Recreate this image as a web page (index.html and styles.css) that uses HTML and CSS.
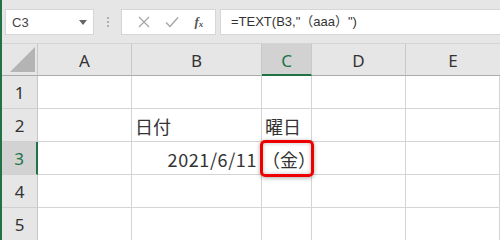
FILE: index.html
```html
<!DOCTYPE html>
<html>
<head>
<meta charset="utf-8">
<link rel="stylesheet" href="styles.css">
</head>
<body>
<div class="app">
  <div class="toolbar">
    <div class="namebox"><span class="name">C3</span><svg class="dd" width="8" height="5" viewBox="0 0 8 5"><path d="M0 0H8L4 5Z" fill="#666"/></svg></div>
    <div class="grip"><i></i><i></i><i></i></div>
    <div class="fbtns">
      <svg width="12" height="12" viewBox="0 0 12 12"><path d="M1 1L11 11M11 1L1 11" stroke="#a6a6a6" stroke-width="1.3" fill="none"/></svg>
      <svg width="14" height="12" viewBox="0 0 14 12"><path d="M1 6.5L5 10.5L13 1.5" stroke="#a6a6a6" stroke-width="1.4" fill="none"/></svg>
      <span class="fx">f<sub>x</sub></span>
    </div>
    <div class="formula">=TEXT(B3,"（aaa）")</div>
  </div>
  <div class="sheet">
    <div class="corner"><svg width="25" height="25" viewBox="0 0 25 25"><path d="M25 0V25H0Z" fill="#b4b4b4"/></svg></div>
    <div class="ch">A</div>
    <div class="ch">B</div>
    <div class="ch sel">C</div>
    <div class="ch">D</div>
    <div class="ch last">E</div>

    <div class="rh">1</div><div class="c"></div><div class="c"></div><div class="c"></div><div class="c"></div><div class="c"></div>
    <div class="rh">2</div><div class="c"></div><div class="c">日付</div><div class="c">曜日</div><div class="c"></div><div class="c"></div>
    <div class="rh sel">3</div><div class="c"></div><div class="c right date">2021/6/11</div><div class="c active">（金）<span class="mark"></span></div><div class="c"></div><div class="c"></div>
    <div class="rh">4</div><div class="c"></div><div class="c"></div><div class="c"></div><div class="c"></div><div class="c"></div>
    <div class="rh">5</div><div class="c"></div><div class="c"></div><div class="c"></div><div class="c"></div><div class="c"></div>
  </div>
</div>
</body>
</html>
```
FILE: styles.css
```css
html, body { margin: 0; padding: 0; }
body {
  width: 500px; height: 240px; overflow: hidden;
  background: #fff;
  font-family: "Noto Sans", "Noto Sans CJK JP", sans-serif;
}
.app { border-left: 2px solid #217346; height: 240px; box-sizing: border-box; }
.toolbar {
  height: 44px; box-sizing: border-box;
  background: #e6e6e6;
  border-bottom: 1px solid #d4d4d4;
  display: flex; align-items: flex-start;
  padding-top: 9px; padding-left: 3px;
}
.namebox {
  width: 89px; height: 26px; box-sizing: border-box;
  background: #fff; border: 1px solid #d6d6d6;
  display: flex; align-items: center; justify-content: space-between;
  padding: 0 6px 0 6px;
}
.name { font-size: 13px; color: #444; font-family: "Liberation Sans", sans-serif; }
.dd { margin-top: 1px; }
.grip { width: 27px; height: 26px; display: flex; flex-direction: column; align-items: center; justify-content: center; gap: 2px; }
.grip i { width: 2px; height: 2px; background: #b0b0b0; display: block; }
.fbtns {
  width: 95px; height: 26px; box-sizing: border-box;
  background: #fff; border: 1px solid #d6d6d6;
  display: flex; align-items: center; justify-content: space-around;
  padding: 0 4px 0 8px;
}
.fx { font-family: "Liberation Serif", serif; font-style: italic; font-size: 13px; color: #555; font-weight: bold; }
.fx sub { font-size: 9px; vertical-align: -1px; }
.formula {
  margin-left: 4px; flex: 1; height: 26px; box-sizing: border-box;
  background: #fff; border: 1px solid #d6d6d6; border-right: none;
  font-size: 13px; color: #333; line-height: 24px; padding-left: 10px;
  font-family: "Liberation Sans", "Noto Sans CJK JP", sans-serif;
}
.sheet {
  display: grid;
  grid-template-columns: 36px 94px 130px 50px 94px 94px;
  grid-template-rows: 32px repeat(5, 33px);
}
.corner, .ch, .rh { background: #e6e6e6; color: #333; }
.corner { border-right: 1px solid #c8c8c8; border-bottom: 1px solid #ababab; display: flex; align-items: flex-end; justify-content: flex-end; padding: 0 2px 3px 0; box-sizing: border-box; }
.ch {
  border-right: 1px solid #c8c8c8; border-bottom: 1px solid #ababab;
  display: flex; align-items: center; justify-content: center;
  font-size: 17px; box-sizing: border-box; padding-top: 2px;
}
.ch.last { border-right: none; }
.ch.sel { background: #d2d2d2; color: #217346; border-bottom: 2px solid #217346; }
.rh {
  border-right: 1px solid #c8c8c8; border-bottom: 1px solid #d0d0d0;
  display: flex; align-items: center; justify-content: center;
  font-size: 17px; box-sizing: border-box;
}
.rh.sel { background: #d2d2d2; color: #217346; border-right: 2px solid #217346; }
.c {
  border-right: 1px solid #d4d4d4; border-bottom: 1px solid #d4d4d4;
  box-sizing: border-box; font-size: 18px; color: #333;
  font-family: "Noto Sans CJK JP", sans-serif;
  display: flex; align-items: center; padding: 1px 3px 0 3px;
  white-space: nowrap;
}
.c.right { justify-content: flex-end; padding-right: 4px; }
.c.date { letter-spacing: 0.6px; }
.c.active { position: relative; justify-content: flex-start; padding-left: 0; }
.mark {
  position: absolute; left: -2px; top: -2px; right: -3px; bottom: -3px;
  border: 3px solid #ee0000; border-radius: 5px;
  box-shadow: 0 1px 4px rgba(0,0,0,0.35), inset 0 0 4px rgba(0,0,0,0.25);
}
```
